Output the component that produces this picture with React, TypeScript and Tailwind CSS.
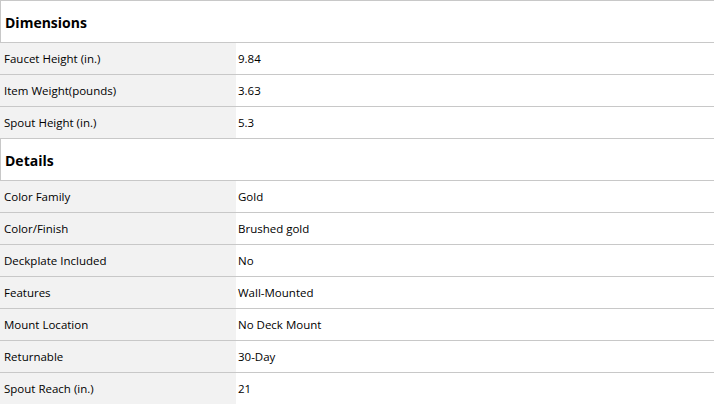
const sections = [
  {
    title: "Dimensions",
    rows: [
      ["Faucet Height (in.)", "9.84"],
      ["Item Weight(pounds)", "3.63"],
      ["Spout Height (in.)", "5.3"],
    ],
  },
  {
    title: "Details",
    rows: [
      ["Color Family", "Gold"],
      ["Color/Finish", "Brushed gold"],
      ["Deckplate Included", "No"],
      ["Features", "Wall-Mounted"],
      ["Mount Location", "No Deck Mount"],
      ["Returnable", "30-Day"],
      ["Spout Reach (in.)", "21"],
    ],
  },
];

export default function App() {
  return (
    <div className="w-[714px] h-[404px] overflow-hidden bg-white text-black font-['Open_Sans',sans-serif]">
      {sections.map((s) => (
        <div key={s.title}>
          <div className="h-[42px] flex items-center border-t border-l border-[#c8c8c8] px-[4px] pt-[2px] text-[14px] font-bold">
            {s.title}
          </div>
          {s.rows.map(([k, v]) => (
            <div key={k} className="flex h-[32px] border-t border-[#c8c8c8] text-[11.5px]">
              <div className="w-[236px] bg-[#f2f2f2] flex items-center px-[4px] pt-[1px]">{k}</div>
              <div className="flex-1 flex items-center px-[2px] pt-[1px]">{v}</div>
            </div>
          ))}
        </div>
      ))}
    </div>
  );
}
